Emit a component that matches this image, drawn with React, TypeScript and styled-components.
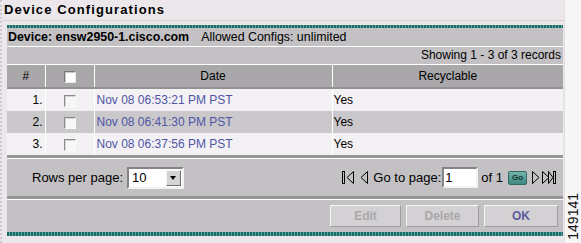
import React from 'react';
import styled, { createGlobalStyle } from 'styled-components';

interface Config {
  id: number;
  date: string;
  recyclable: string;
}

const configs: Config[] = [
  { id: 1, date: 'Nov 08 06:53:21 PM PST', recyclable: 'Yes' },
  { id: 2, date: 'Nov 08 06:41:30 PM PST', recyclable: 'Yes' },
  { id: 3, date: 'Nov 08 06:37:56 PM PST', recyclable: 'Yes' },
];

const FirstIcon = () => (
  <svg width="12" height="13" viewBox="0 0 12 13">
    <rect x="0.5" y="0.5" width="2" height="12" fill="none" stroke="#000" />
    <polygon points="11.5,0.5 5,6.5 11.5,12.5" fill="none" stroke="#000" />
  </svg>
);

const PrevIcon = () => (
  <svg width="8" height="13" viewBox="0 0 8 13">
    <polygon points="7.5,0.5 1,6.5 7.5,12.5" fill="none" stroke="#000" />
  </svg>
);

const NextIcon = () => (
  <svg width="8" height="13" viewBox="0 0 8 13">
    <polygon points="0.5,0.5 7,6.5 0.5,12.5" fill="none" stroke="#000" />
  </svg>
);

const LastIcon = () => (
  <svg width="15" height="13" viewBox="0 0 15 13">
    <polygon points="0.5,0.5 7,6.5 0.5,12.5" fill="none" stroke="#000" />
    <polygon points="6.5,0.5 11,6.5 6.5,12.5" fill="none" stroke="#000" />
    <rect x="11.5" y="0.5" width="2" height="12" fill="none" stroke="#000" />
  </svg>
);

const App: React.FC = () => {
  return (
    <Page>
      <GlobalStyle />
      <Main>
        <Title>Device Configurations</Title>
        <Panel>
          <TealRule $h={3} />
          <InfoBar>
            <strong>Device: ensw2950-1.cisco.com</strong>
            <Allowed>Allowed Configs: unlimited</Allowed>
          </InfoBar>
          <RecordsBar>Showing 1 - 3 of 3 records</RecordsBar>
          <Grid>
            <colgroup>
              <col style={{ width: 38 }} />
              <col style={{ width: 49 }} />
              <col style={{ width: 238 }} />
              <col />
            </colgroup>
            <thead>
              <tr>
                <HeadCell>#</HeadCell>
                <HeadCell>
                  <HeadCheck />
                </HeadCell>
                <HeadCell>Date</HeadCell>
                <HeadCell>Recyclable</HeadCell>
              </tr>
            </thead>
            <tbody>
              {configs.map((c, i) => (
                <Row key={c.id} $odd={i % 2 === 1}>
                  <NumCell>{c.id}.</NumCell>
                  <CheckCell>
                    <RowCheck />
                  </CheckCell>
                  <DateCell>{c.date}</DateCell>
                  <Cell>{c.recyclable}</Cell>
                </Row>
              ))}
            </tbody>
          </Grid>
          <Pager>
            <PerPage>
              Rows per page:
              <FakeSelect>
                <SelectValue>10</SelectValue>
                <SelectArrow />
              </FakeSelect>
            </PerPage>
            <PageNav>
              <FirstIcon />
              <NavGap $w={6} />
              <PrevIcon />
              <NavGap $w={5} />
              <span>Go to page:</span>
              <PageInput>1</PageInput>
              <span>of 1</span>
              <GoButton>Go</GoButton>
              <NextIcon />
              <NavGap $w={2} />
              <LastIcon />
            </PageNav>
          </Pager>
          <ButtonRow>
            <ActionButton $width={71} disabled>Edit</ActionButton>
            <ActionButton $width={73} disabled>Delete</ActionButton>
            <ActionButton $width={74}>OK</ActionButton>
          </ButtonRow>
          <TealRule $h={4} />
        </Panel>
      </Main>
      <Side>
        <FigureId>149141</FigureId>
      </Side>
    </Page>
  );
};

const GlobalStyle = createGlobalStyle`
  html, body {
    margin: 0;
    padding: 0;
  }
  body {
    background: #ebe7eb;
    font-family: "Liberation Sans", Arial, sans-serif;
    font-size: 12px;
    color: #000;
  }
`;

const Page = styled.div`
  display: flex;
  width: 581px;
  height: 243px;
  overflow: hidden;
`;

const Main = styled.div`
  width: 565px;
  border-left: 2px dotted #cfc9cf;
`;

const Side = styled.div`
  flex: 1;
  background: #f7f6f7;
  border-left: 1px solid #e2dee2;
  display: flex;
  align-items: flex-end;
  justify-content: center;
`;

const FigureId = styled.div`
  writing-mode: vertical-rl;
  transform: rotate(180deg);
  font-size: 14px;
  color: #111;
  padding-top: 3px;
`;

const Title = styled.div`
  height: 20px;
  line-height: 20px;
  padding-left: 2px;
  font-size: 13px;
  font-weight: bold;
  letter-spacing: 1.1px;
  border-bottom: 1px solid #dccdd2;
  margin-bottom: 4px;
`;

const Panel = styled.div`
  margin-left: 5px;
  width: 556px;
  background: #c3c1c3;
`;

const TealRule = styled.div<{ $h: number }>`
  height: ${(p) => p.$h}px;
  background: repeating-linear-gradient(90deg, #166e66 0 2px, #5fa59d 2px 3px);
`;

const InfoBar = styled.div`
  height: 18px;
  line-height: 18px;
  padding-left: 1px;
  font-size: 12.4px;
  white-space: nowrap;
`;

const Allowed = styled.span`
  margin-left: 12px;
`;

const RecordsBar = styled.div`
  border-top: 1px solid #fff;
  height: 17px;
  line-height: 17px;
  text-align: right;
  padding-right: 2px;
`;

const Grid = styled.table`
  width: 100%;
  border-collapse: collapse;
  table-layout: fixed;
  border-top: 1px solid #fff;
  border-bottom: 3px solid #979597;
`;

const HeadCell = styled.th`
  height: 22px;
  padding: 0;
  background: #a9a7a9;
  font-weight: normal;
  text-align: center;
  border-left: 1px solid #fff;
  border-bottom: 2px solid #939193;
  &:first-child {
    border-left: none;
  }
`;

const HeadCheck = styled.span`
  display: inline-block;
  width: 10px;
  height: 10px;
  vertical-align: middle;
  background: #fff;
  border: 1px solid;
  border-color: #7a787a #e8e8e8 #e8e8e8 #7a787a;
  box-shadow: inset 1px 1px #c8c8c8;
`;

const Row = styled.tr<{ $odd: boolean }>`
  background: ${(p) => (p.$odd ? '#cac8ca' : '#f3f1f3')};
`;

const Cell = styled.td`
  height: 22px;
  padding: 0 0 0 1px;
  border-left: 1px solid #fff;
  white-space: nowrap;
`;

const NumCell = styled(Cell)`
  text-align: right;
  padding: 0 2px 0 0;
  border-left: none;
`;

const CheckCell = styled(Cell)`
  text-align: center;
  padding: 0;
`;

const DateCell = styled(Cell)`
  padding-left: 2px;
  color: #4f55a6;
`;

const RowCheck = styled.span`
  display: inline-block;
  width: 10px;
  height: 10px;
  vertical-align: middle;
  background: #f7f7f7;
  border: 1px solid;
  border-color: #8c8a8c #fafafa #fafafa #8c8a8c;
  box-shadow: inset 1px 1px #d6d4d6;
`;

const Pager = styled.div`
  border-top: 1px solid #fff;
  height: 37px;
  display: flex;
  align-items: center;
  justify-content: space-between;
  padding: 0 6px 0 25px;
  border-bottom: 3px solid #979597;
`;

const PerPage = styled.div`
  display: flex;
  align-items: center;
  font-size: 13px;
  gap: 4px;
`;

const FakeSelect = styled.div`
  display: flex;
  align-items: center;
  width: 53px;
  height: 18px;
  background: #fff;
  border: 2px solid;
  border-color: #858385 #f2f2f2 #f2f2f2 #858385;
`;

const SelectValue = styled.span`
  flex: 1;
  padding-left: 3px;
  font-size: 13px;
`;

const SelectArrow = styled.span`
  position: relative;
  width: 15px;
  height: 16px;
  margin-right: 1px;
  background: #d6d3d6;
  border: 1px solid;
  border-color: #f4f4f4 #6e6c6e #6e6c6e #f4f4f4;
  box-sizing: border-box;
  &::after {
    content: '';
    position: absolute;
    left: 3px;
    top: 5px;
    border-left: 3.5px solid transparent;
    border-right: 3.5px solid transparent;
    border-top: 4px solid #000;
  }
`;

const PageNav = styled.div`
  display: flex;
  align-items: center;
  font-size: 13px;
`;

const NavGap = styled.span<{ $w: number }>`
  display: inline-block;
  width: ${(p) => p.$w}px;
`;

const PageInput = styled.div`
  width: 31px;
  height: 17px;
  margin: 0 3px 0 1px;
  padding-left: 1px;
  line-height: 17px;
  background: #fff;
  border: 2px solid;
  border-color: #858385 #f2f2f2 #f2f2f2 #858385;
`;

const GoButton = styled.span`
  display: inline-flex;
  align-items: center;
  justify-content: center;
  width: 19px;
  height: 14px;
  margin: 0 5px 0 5px;
  border-radius: 2px;
  background: linear-gradient(#73b4ac, #3e8880);
  border: 1px solid #2f6a64;
  box-sizing: border-box;
  font-size: 8px;
  font-weight: bold;
  color: #0e3835;
`;

const ButtonRow = styled.div`
  border-top: 1px solid #fff;
  height: 32px;
  display: flex;
  align-items: center;
  justify-content: flex-end;
  gap: 5px;
  padding-right: 5px;
`;

const ActionButton = styled.button<{ $width: number }>`
  width: ${(p) => p.$width}px;
  height: 22px;
  padding: 0;
  font-family: "Liberation Sans", Arial, sans-serif;
  font-size: 12px;
  font-weight: bold;
  color: #5d5d9b;
  background: #d3d1d3;
  border: 1px solid;
  border-color: #f6f6f6 #9e9c9e #9e9c9e #f6f6f6;
  cursor: pointer;
  &:disabled {
    color: #a9a7a9;
    cursor: default;
  }
`;

export default App;
